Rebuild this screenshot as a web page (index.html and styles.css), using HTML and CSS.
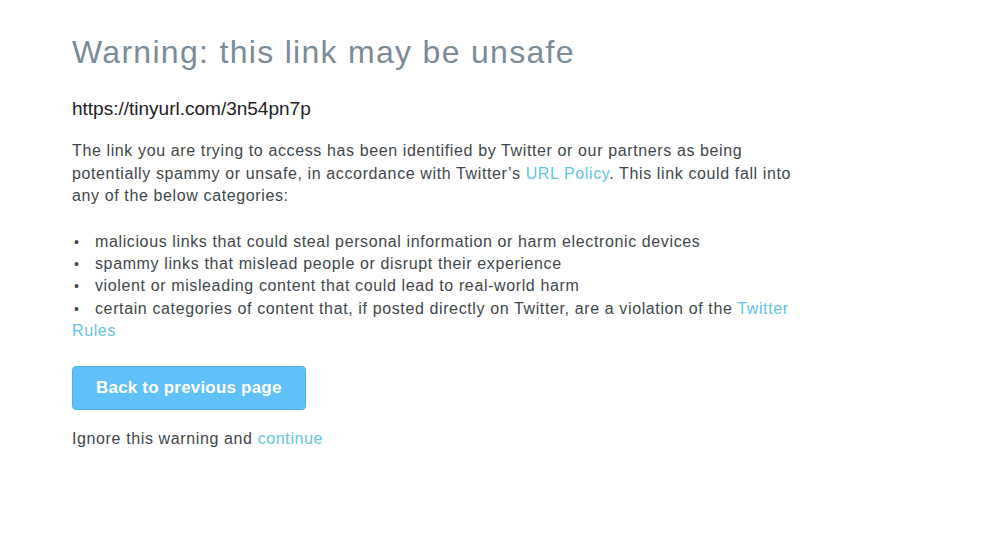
FILE: index.html
```html
<!DOCTYPE html>
<html lang="en">
  <head>
    <meta charset="UTF-8" />
    <meta name="viewport" content="width=device-width, initial-scale=1.0" />
    <title>Twitter</title>
    <link rel="stylesheet" href="styles.css">
  </head>
  <body>
    <div class="warning">
      <h1>Warning: this link may be unsafe</h1>
      <p class="url">https://tinyurl.com/3n54pn7p</p>
      <p>
        The link you are trying to access has been identified by Twitter or our partners as being
        potentially spammy or unsafe, in accordance with Twitter’s <a href="#">URL Policy</a>. This link could fall into
        any of the below categories:
      </p>
      <ul>
        <li>malicious links that could steal personal information or harm electronic devices</li>
        <li>spammy links that mislead people or disrupt their experience</li>
        <li>violent or misleading content that could lead to real-world harm</li>
        <li>certain categories of content that, if posted directly on Twitter, are a violation of the <a href="#">Twitter Rules</a></li>
      </ul>
      <button class="back">Back to previous page</button>
      <p class="ignore">Ignore this warning and <a href="#">continue</a></p>
    </div>
  </body>
</html>
```

FILE: styles.css
```css
:root {
  --text: #41474b;
  --title: #7b8b98;
  --link: #62c4e6;
  --btn: #60c0fa;
  --btn-border: #4db3ee;
}

body {
  margin: 0;
  color: var(--text);
  background: #fff;
  font-family: "Liberation Sans", Arial, sans-serif;
  font-size: 16px;
  line-height: 22.4px;
  letter-spacing: 0.62px;
}

.warning {
  width: 740px;
  padding: 32px 0 0 72px;
}

h1 {
  margin: 0 0 26px;
  color: var(--title);
  font-size: 32px;
  font-weight: normal;
  line-height: 40px;
  letter-spacing: 1.3px;
}

p {
  margin: 0 0 23px;
}

.url {
  margin-bottom: 20px;
  color: #1c2124;
  font-size: 19px;
  letter-spacing: 0;
}

a {
  color: var(--link);
  text-decoration: none;
}

ul {
  margin: 0 0 23px;
  padding: 0;
  list-style: none;
}

ul li::before {
  content: "•";
  display: inline-block;
  width: 21px;
  padding-left: 2px;
  font-size: 14px;
  letter-spacing: 0;
}

.back {
  display: block;
  height: 44px;
  margin-bottom: 18px;
  padding: 0 23px 0 23px;
  border: 1px solid var(--btn-border);
  border-radius: 4px;
  background: var(--btn);
  color: #fff;
  font-family: inherit;
  font-size: 17px;
  font-weight: bold;
  letter-spacing: 0.2px;
  cursor: pointer;
}

.ignore {
  margin: 0;
}
```
